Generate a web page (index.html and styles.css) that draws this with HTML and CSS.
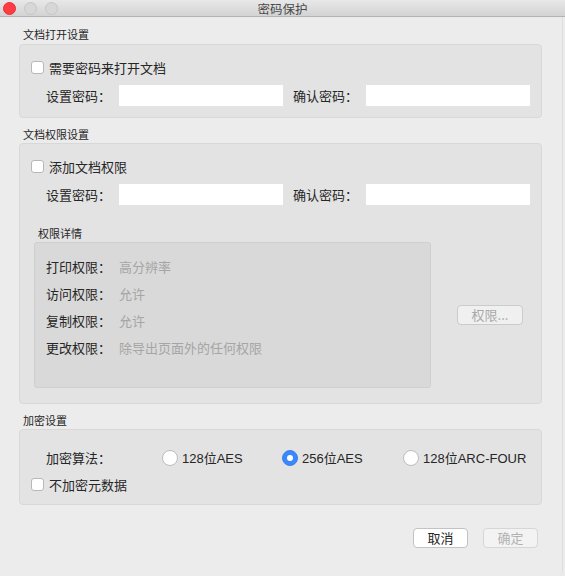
FILE: index.html
```html
<!DOCTYPE html>
<html lang="zh">
<head>
<meta charset="utf-8">
<title>密码保护</title>
<link rel="stylesheet" href="styles.css">
</head>
<body>
<div class="window">
  <div class="titlebar">
    <div class="lights">
      <span class="light red"></span>
      <span class="light"></span>
      <span class="light"></span>
    </div>
    <div class="title">密码保护</div>
    <div></div>
  </div>

  <div class="content">
    <div class="section-label first">文档打开设置</div>
    <div class="box">
      <label class="check-row"><span class="checkbox"></span><span>需要密码来打开文档</span></label>
      <div class="pw-row">
        <span class="field-label">设置密码：</span><span class="input"></span>
        <span class="field-label second">确认密码：</span><span class="input"></span>
      </div>
    </div>

    <div class="section-label">文档权限设置</div>
    <div class="box box-perm">
      <label class="check-row"><span class="checkbox"></span><span>添加文档权限</span></label>
      <div class="pw-row">
        <span class="field-label">设置密码：</span><span class="input"></span>
        <span class="field-label second">确认密码：</span><span class="input"></span>
      </div>
      <div class="perm-grid">
        <div class="sub-label">权限详情</div>
        <div class="inner-box">
          <div class="perm-row"><span class="field-label">打印权限：</span><span class="value">高分辨率</span></div>
          <div class="perm-row"><span class="field-label">访问权限：</span><span class="value">允许</span></div>
          <div class="perm-row"><span class="field-label">复制权限：</span><span class="value">允许</span></div>
          <div class="perm-row"><span class="field-label">更改权限：</span><span class="value">除导出页面外的任何权限</span></div>
        </div>
        <div class="perm-btn">权限...</div>
      </div>
    </div>

    <div class="section-label">加密设置</div>
    <div class="box box-enc">
      <div class="enc-row">
        <span class="field-label">加密算法：</span>
        <span class="radio-opt"><span class="radio"></span>128位AES</span>
        <span class="radio-opt"><span class="radio on"></span>256位AES</span>
        <span class="radio-opt"><span class="radio"></span>128位ARC-FOUR</span>
      </div>
      <label class="check-row"><span class="checkbox"></span><span>不加密元数据</span></label>
    </div>

    <div class="buttons">
      <div class="btn">取消</div>
      <div class="btn disabled">确定</div>
    </div>
  </div>
</div>
</body>
</html>
```

FILE: styles.css
```css
html, body {
  margin: 0;
  padding: 0;
  background: #ececec;
}
body {
  width: 565px;
  height: 576px;
  overflow: hidden;
  font-family: "Liberation Sans", "Noto Sans CJK SC", sans-serif;
  color: #262626;
  font-size: 13px;
}
.window {
  width: 563px;
  height: 576px;
  background: #ececec;
  border-right: 1px solid #dedede;
  border-bottom-right-radius: 5px;
  box-sizing: border-box;
}
.titlebar {
  height: 17px;
  box-sizing: border-box;
  width: 565px;
  background: linear-gradient(#e8e8e8, #d3d3d3);
  border-bottom: 1px solid #b3b3b3;
  display: grid;
  grid-template-columns: 1fr auto 1fr;
  align-items: center;
}
.lights {
  display: flex;
  gap: 8px;
  padding-left: 3px;
  align-items: center;
  height: 15px;
}
.light {
  width: 11px;
  height: 11px;
  border-radius: 50%;
  background: #d7d7d7;
  border: 1px solid #c6c6c6;
  display: block;
}
.light.red {
  background: #fd3d41;
  border-color: #e2323a;
}
.title {
  font-family: "Noto Sans CJK SC", sans-serif;
  font-size: 12.5px;
  line-height: 15px;
  padding-top: 1px;
  color: #4a4a4a;
  white-space: nowrap;
}
.content {
  padding: 0 0 0 19px;
  width: 523px;
}
.section-label {
  font-family: "Noto Sans CJK SC", sans-serif;
  font-size: 11px;
  line-height: 14px;
  padding-left: 4px;
  margin-top: 9px;
  margin-bottom: 2px;
}
.section-label.first {
  margin-top: 10px;
  margin-bottom: 3px;
}
.box {
  background: #e3e3e3;
  border: 1px solid #d8d8d8;
  border-radius: 4px;
  padding: 15px 0 11px 0;
  display: flex;
  flex-direction: column;
}
.check-row {
  display: flex;
  align-items: center;
  height: 14px;
  padding-left: 11px;
  gap: 5px;
  font-family: "Noto Sans CJK SC", sans-serif;
  font-size: 13px;
}
.checkbox {
  width: 11px;
  height: 11px;
  background: #fff;
  border: 1px solid #b8b8b8;
  border-radius: 3px;
  display: block;
  flex: none;
}
.pw-row {
  display: flex;
  align-items: center;
  margin-top: 11px;
  padding-left: 26px;
  height: 21px;
}
.field-label {
  width: 73px;
  flex: none;
  font-family: "Noto Sans CJK SC", sans-serif;
  font-size: 13px;
  white-space: nowrap;
}
.field-label.second {
  margin-left: 10px;
}
.input {
  width: 164px;
  height: 21px;
  background: #fff;
  display: block;
}
.box-perm {
  padding-bottom: 15px;
}
.perm-grid {
  display: grid;
  grid-template-columns: 397px 1fr;
  margin-top: 21px;
  padding-left: 14px;
}
.sub-label {
  grid-column: 1;
  font-family: "Noto Sans CJK SC", sans-serif;
  font-size: 11px;
  line-height: 14px;
  padding-left: 4px;
  margin-bottom: 2px;
}
.inner-box {
  grid-column: 1;
  grid-row: 2;
  height: 146px;
  box-sizing: border-box;
  background: #d9d9d9;
  border: 1px solid #cfcfcf;
  border-radius: 3px;
  padding: 10px 0 0 11px;
}
.perm-row {
  display: flex;
  align-items: center;
  height: 27px;
}
.value {
  font-family: "Noto Sans CJK SC", sans-serif;
  color: #a5a5a5;
}
.perm-btn {
  grid-column: 2;
  grid-row: 2;
  align-self: center;
  justify-self: end;
  margin-right: 18px;
  width: 66px;
  height: 20px;
  box-sizing: border-box;
  background: #f0f0f0;
  border: 1px solid #cbcbcb;
  border-radius: 4px;
  color: #a9a9a9;
  font-family: "Noto Sans CJK SC", sans-serif;
  font-size: 13px;
  line-height: 18px;
  text-align: center;
}
.box-enc {
  padding: 18px 0 13px 0;
}
.enc-row {
  display: grid;
  grid-template-columns: 116px 120px 121px auto;
  align-items: center;
  height: 16px;
  padding-left: 26px;
  margin-bottom: 13px;
}
.enc-row .field-label {
  width: auto;
}
.radio-opt {
  display: flex;
  align-items: center;
  gap: 4px;
  font-size: 13px;
  white-space: nowrap;
}
.radio {
  width: 14px;
  height: 14px;
  border-radius: 50%;
  background: #fff;
  border: 1px solid #bdbdbd;
  display: block;
  flex: none;
  box-sizing: content-box;
}
.radio.on {
  background: #3b88fc;
  border-color: #3a80ea;
  position: relative;
}
.radio.on::after {
  content: "";
  position: absolute;
  width: 6px;
  height: 6px;
  border-radius: 50%;
  background: #fff;
  left: 4px;
  top: 4px;
}
.buttons {
  display: flex;
  justify-content: flex-end;
  gap: 15px;
  margin-top: 23px;
  padding-right: 4px;
}
.btn {
  width: 55px;
  height: 20px;
  box-sizing: border-box;
  background: #fff;
  border: 1px solid #c3c3c3;
  border-radius: 4px;
  font-family: "Noto Sans CJK SC", sans-serif;
  font-size: 13px;
  line-height: 18px;
  text-align: center;
  color: #262626;
}
.btn.disabled {
  background: #f3f3f3;
  border-color: #d6d6d6;
  color: #b2b2b2;
}
```
